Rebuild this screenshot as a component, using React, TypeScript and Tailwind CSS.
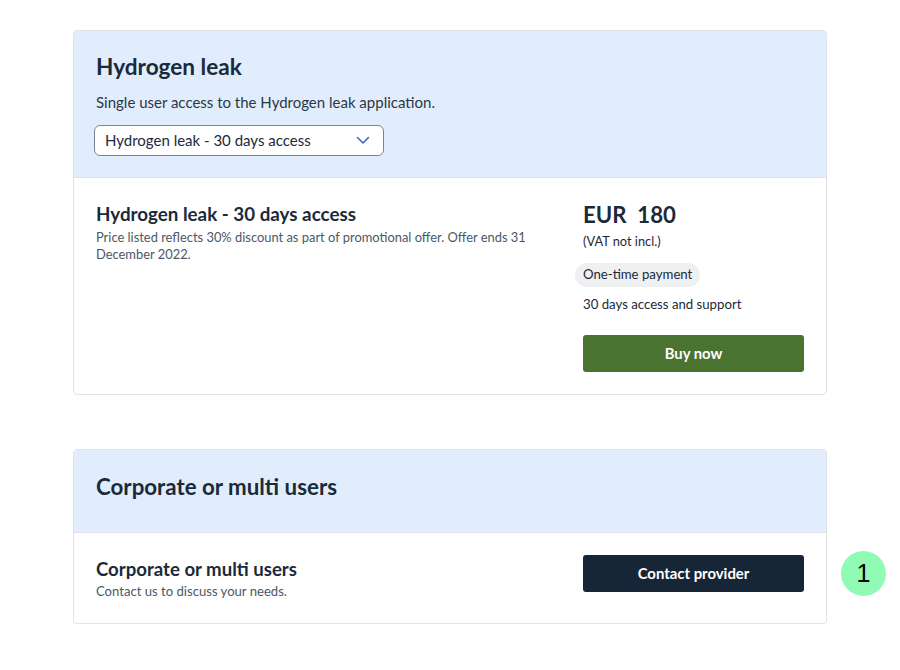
import React from "react";

export default function App() {
  return (
    <div
      className="min-h-[670px] w-full bg-white text-[#1b2a3a]"
      style={{ fontFamily: "Lato, 'Open Sans', sans-serif" }}
    >
      <div className="ml-[73px] w-[754px] pt-[30px]">
        {/* Card 1 */}
        <div className="overflow-hidden rounded-[4px] border border-[#dfe2e6]">
          <div className="border-b border-[#dfe2e6] bg-[#e1edfd] px-[22px] pt-[22px] pb-[21px]">
            <h1 className="text-[22.6px] font-bold leading-[28px]">Hydrogen leak</h1>
            <p className="mt-[11px] text-[15px] leading-[20px] text-[#2a3846]">
              Single user access to the Hydrogen leak application.
            </p>
            <div className="mt-[13px] -ml-[2px] flex h-[31px] w-[290px] items-center justify-between rounded-[6px] border border-[#7b8591] bg-white pl-[10px] pr-[13px] text-[15px] text-[#1b2a3a]">
              <span>Hydrogen leak - 30 days access</span>
              <svg width="14" height="9" viewBox="0 0 14 9" fill="none">
                <path d="M1.5 1.5 L7 7 L12.5 1.5" stroke="#3d64c8" strokeWidth="1.6" strokeLinecap="round" strokeLinejoin="round" />
              </svg>
            </div>
          </div>
          <div className="flex justify-between px-[22px] pt-[24px] pb-[22px]">
            <div className="w-[450px]">
              <h2 className="text-[18.8px] font-bold leading-[24px]">Hydrogen leak - 30 days access</h2>
              <p className="mt-[3px] text-[12.9px] leading-[17px] text-[#4b5866]">
                Price listed reflects 30% discount as part of promotional offer. Offer ends 31 December 2022.
              </p>
            </div>
            <div className="-mt-[1px] w-[221px]">
              <div className="pt-[1px] text-[22.2px] font-bold leading-[26px] whitespace-pre">EUR  180</div>
              <div className="mt-[5px] text-[12.8px] leading-[16px] text-[#1b2a3a]">(VAT not incl.)</div>
              <div className="-ml-[8px] mt-[14px] inline-flex h-[24px] items-center rounded-full bg-[#eef0f2] px-[8px] text-[13.2px] text-[#1b2a3a]">
                One-time payment
              </div>
              <div className="mt-[9px] text-[13.2px] leading-[16px]">30 days access and support</div>
              <button className="mt-[23px] flex h-[37px] w-full items-center justify-center rounded-[3px] bg-[#4b7330] text-[14.8px] font-bold text-white">
                Buy now
              </button>
            </div>
          </div>
        </div>

        {/* Card 2 */}
        <div className="relative mt-[54px] rounded-[4px] border border-[#dfe2e6]">
          <div className="flex h-[83px] items-center rounded-t-[4px] border-b border-[#dfe2e6] bg-[#e1edfd] px-[22px]">
            <h1 className="-mt-[9px] text-[22.3px] font-bold leading-[28px]">Corporate or multi users</h1>
          </div>
          <div className="flex justify-between px-[22px] pt-[22px] pb-[23px]">
            <div className="pt-[2px]">
              <h2 className="text-[18.6px] font-bold leading-[24px]">Corporate or multi users</h2>
              <p className="mt-[2px] text-[13.1px] leading-[17px] text-[#4b5866]">Contact us to discuss your needs.</p>
            </div>
            <button className="flex h-[37px] w-[221px] items-center justify-center rounded-[3px] bg-[#172636] text-[14.9px] font-bold text-white">
              Contact provider
            </button>
          </div>
          <div
            className="absolute left-[767px] top-[101px] flex h-[45px] w-[45px] items-center justify-center rounded-full bg-[#8ffbb4] text-[25px] text-black"
            style={{ fontFamily: "'Liberation Sans', Arial, sans-serif" }}
          >
            1
          </div>
        </div>
      </div>
    </div>
  );
}
